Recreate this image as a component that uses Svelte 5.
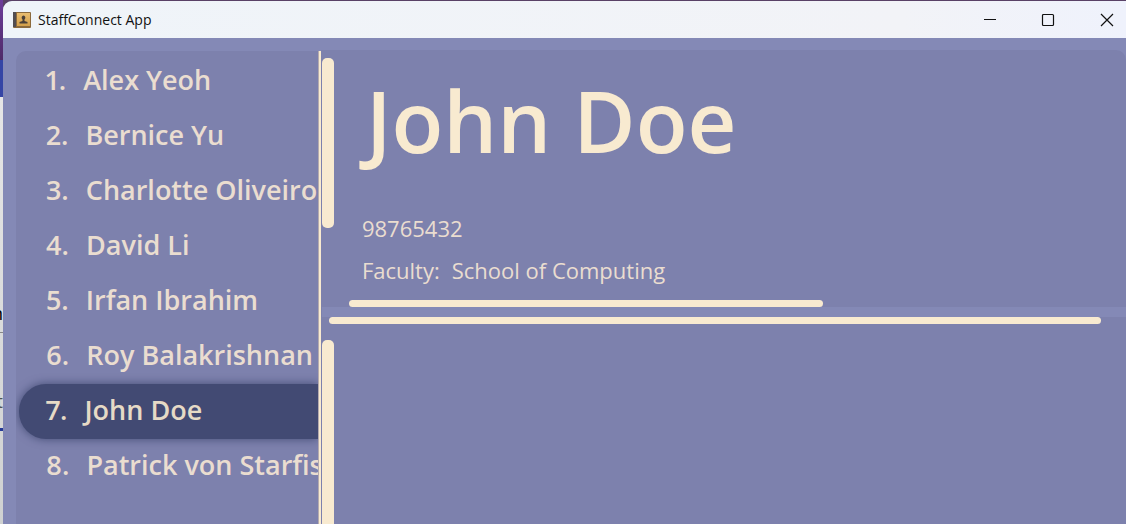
<script>
  const people = [
    'Alex Yeoh',
    'Bernice Yu',
    'Charlotte Oliveiro',
    'David Li',
    'Irfan Ibrahim',
    'Roy Balakrishnan',
    'John Doe',
    'Patrick von Starfish'
  ];
  let selected = $state(6);
</script>

<div class="desktop">
  <div class="behind" aria-hidden="true">
    <div class="sky"></div>
    <div class="blue"></div>
    <div class="paper">
      <span class="letter first">n</span>
      <span class="rule upper"></span>
      <span class="letter second">t</span>
      <span class="rule accent"></span>
    </div>
  </div>
  <div class="window">
    <header class="titlebar">
      <svg class="logo" width="18" height="18" viewBox="0 0 18 18" aria-hidden="true">
        <defs>
          <linearGradient id="cover" x1="0" y1="0" x2="0" y2="1">
            <stop offset="0" stop-color="#e9bd70" />
            <stop offset="1" stop-color="#d3a04b" />
          </linearGradient>
        </defs>
        <rect x="0" y="1" width="18" height="16" rx="1" fill="#8b6a3d" />
        <rect x="0" y="1" width="3" height="15" fill="#514d50" />
        <rect x="4" y="2" width="13" height="13" fill="url(#cover)" />
        <path d="M10.500 4.500a2 2.200 0 0 1 1 4V10l3 1v1.500h-8V11l3-1V8.500a2 2.200 0 0 1 1-4z" fill="#4b4038" />
      </svg>
      <span class="title">StaffConnect App</span>
      <div class="controls">
        <button aria-label="Minimize"><svg width="14" height="14" viewBox="0 0 14 14"><path d="M1 6.500h12" /></svg></button>
        <button aria-label="Maximize"><svg width="14" height="14" viewBox="0 0 14 14"><rect x="1.500" y="1.500" width="11" height="11" rx="1" /></svg></button>
        <button aria-label="Close"><svg width="14" height="14" viewBox="0 0 14 14"><path d="M1 1l12 12M13 1L1 13" /></svg></button>
      </div>
    </header>
    <main>
      <nav class="people" aria-label="People">
        {#each people as name, i}
          <button class="person" class:selected={selected === i} onclick={() => (selected = i)}>
            <span>{i + 1}.</span><span>{name}</span>
          </button>
        {/each}
      </nav>
      <div class="divider"></div>
      <div class="details">
        <section class="card">
          <div class="track"><div class="thumb"></div></div>
          <div class="info">
            <h1>{people[selected]}</h1>
            <p>98765432</p>
            <p class="faculty"><span>Faculty:</span><span>School of Computing</span></p>
            <div class="hbar"></div>
          </div>
        </section>
        <section class="lower">
          <div class="hbar"></div>
          <div class="thumb"></div>
        </section>
      </div>
    </main>
  </div>
</div>

<style>
  :global(body) {
    margin: 0;
  }
  .desktop {
    display: grid;
    grid-template-columns: 3px minmax(0, 1fr);
    height: 100vh;
    overflow: hidden;
    background: linear-gradient(#594166 0 50px, #b9bac5 98px);
    font-family: 'Open Sans', 'Noto Sans', sans-serif;
  }
  .behind {
    display: flex;
    flex-direction: column;
    overflow: hidden;
  }
  .sky {
    height: 60px;
    background: linear-gradient(#6d3c9a, #4f2b68);
  }
  .blue {
    height: 37px;
    background: #3545a5;
  }
  .paper {
    flex: 1;
    position: relative;
    background: linear-gradient(#e6e6e6, #cfd1d1);
  }
  .letter {
    position: absolute;
    right: 0;
    font-size: 18px;
    line-height: 20px;
  }
  .first {
    top: 206px;
  }
  .second {
    top: 294px;
    color: #555;
  }
  .rule {
    position: absolute;
    left: 0;
    right: 0;
    height: 1px;
    background: #888;
  }
  .upper {
    top: 235px;
  }
  .accent {
    top: 331px;
    height: 3px;
    background: #263a96;
  }
  .window {
    display: flex;
    flex-direction: column;
    min-height: 0;
    margin-top: 1px;
    border-radius: 9px 0 0 0;
    overflow: hidden;
    background: #8489b6;
  }
  .titlebar {
    display: flex;
    align-items: center;
    flex: none;
    height: 37px;
    padding-left: 10px;
    gap: 7px;
    background: linear-gradient(90deg, #eff4f9, #f2f3f7 80%, #eff2fc);
  }
  .title {
    font-size: 14px;
    line-height: 20px;
    color: #111;
  }
  .controls {
    display: flex;
    margin-left: auto;
    align-self: stretch;
  }
  .controls button {
    display: grid;
    place-items: center;
    width: 58px;
    padding: 0;
    border: 0;
    background: none;
  }
  .controls button:last-child {
    width: 49px;
    padding: 0 0 0 11px;
  }
  .controls svg {
    fill: none;
    stroke: #111;
    stroke-width: 1.2;
  }
  main {
    flex: 1;
    display: grid;
    grid-template-columns: minmax(0, 3fr) 3px minmax(0, 8fr);
    min-height: 0;
    padding: 12px 0 0 13px;
  }
  .people {
    margin-top: 1px;
    padding: 3px 0 0 3px;
    overflow: hidden;
    border-radius: 10px 0 0 0;
    background: #7d81ad;
  }
  .person {
    display: flex;
    align-items: center;
    gap: 17px;
    width: 100%;
    height: 55px;
    padding: 0 0 3px 27px;
    border: 0;
    background: none;
    color: #eaddd0;
    font: 600 27px/40px 'Open Sans', 'Noto Sans', sans-serif;
    font-variant-numeric: proportional-nums;
    white-space: nowrap;
    text-align: left;
  }
  .selected {
    border-radius: 27px 0 0 27px;
    background: #424a73;
    color: #e6dac6;
    box-shadow: 0 0 10px #424a73;
  }
  .divider {
    margin-top: 1px;
    background: #f8ead0;
    border-left: 1px solid #b5abae;
    box-sizing: border-box;
  }
  .details {
    display: flex;
    flex-direction: column;
    gap: 10px;
    padding-left: 1px;
    background: linear-gradient(90deg, #7d81ad 1px, transparent 1px);
  }
  .card {
    display: grid;
    grid-template-columns: 12px minmax(0, 1fr);
    border-radius: 0 10px 0 0;
    background: #7d81ad;
  }
  .thumb {
    width: 12px;
    border-radius: 5px;
    background: #f8ead0;
  }
  .track {
    padding-top: 8px;
  }
  .track .thumb {
    height: 170px;
  }
  .info {
    padding: 12px 0 0 28px;
    color: #eaddd0;
  }
  h1 {
    margin: 0 0 34px;
    padding-left: 4px;
    font-size: 85px;
    font-weight: 600;
    line-height: 116px;
    color: #f8ead0;
  }
  p {
    margin: 0 0 10px;
    font-size: 22px;
    line-height: 32px;
  }
  .faculty {
    display: flex;
    gap: 12px;
    margin-bottom: 14px;
  }
  .hbar {
    height: 7px;
    border-radius: 4px;
    background: #f8ead0;
  }
  .info .hbar {
    width: 62%;
    margin-left: -13px;
  }
  .lower {
    flex: 1;
    display: flex;
    flex-direction: column;
    gap: 16px;
    background: #7d81ad;
  }
  .lower .hbar {
    margin: 0 25px 0 7px;
  }
  .lower .thumb {
    flex: 1;
    border-radius: 5px 5px 0 0;
  }
</style>
